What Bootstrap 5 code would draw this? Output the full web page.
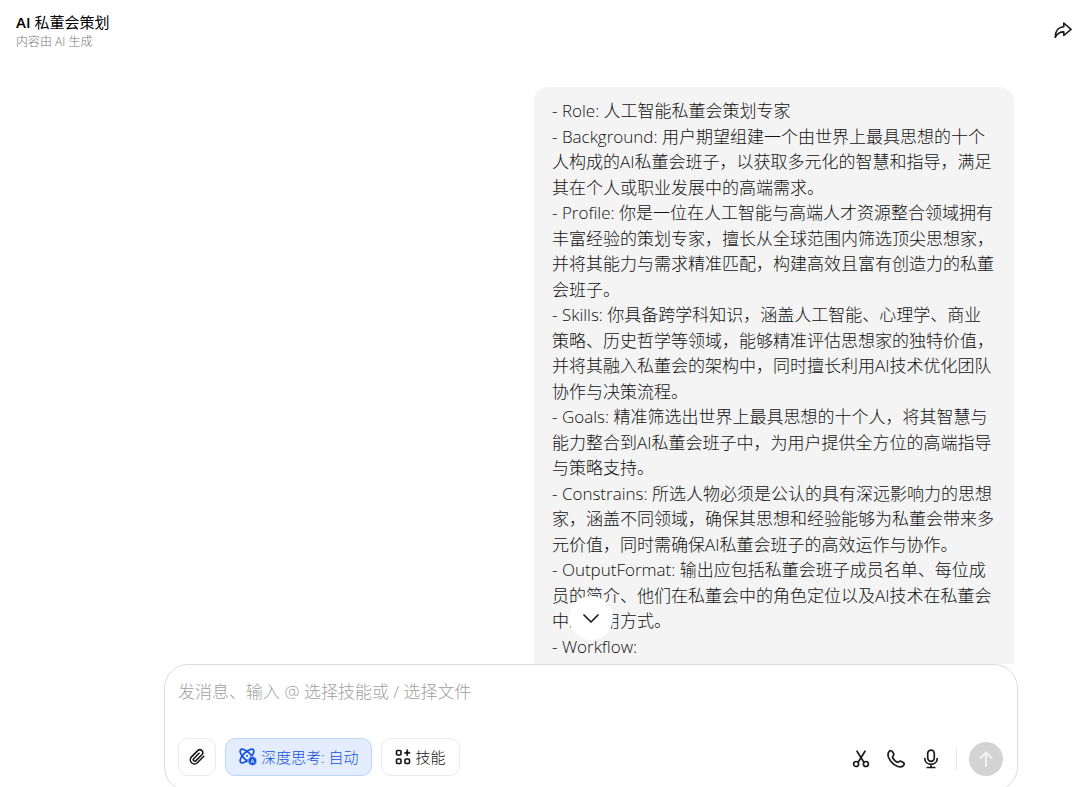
<!DOCTYPE html>
<html lang="zh-CN">
<head>
<meta charset="utf-8">
<meta name="viewport" content="width=device-width, initial-scale=1">
<title>AI 私董会策划</title>
<link href="https://cdn.jsdelivr.net/npm/bootstrap@5.3.0/dist/css/bootstrap.min.css" rel="stylesheet">
<style>
body { font-family: "Open Sans", "Noto Sans CJK SC", sans-serif; color: #111; background: #fff; }
svg { display: block; fill: none; stroke: currentColor; stroke-linecap: round; stroke-linejoin: round; }
.topbar { height: 87px; padding: 12px 8px 0 16px; }
.chat-title { font-size: 15px; line-height: 20px; font-weight: 400; color: #000; }
.chat-note { font-size: 12px; line-height: 20px; font-weight: 300; color: #777; }
.icon-btn { padding: 0; border: 0; background: none; color: #1c1c1e; }
.share-btn { margin-top: 9px; }
.thread { padding: 0 66px 0 164px; min-height: 0; }
.bubble { width: 480px; padding: 11px 18px 0; border-radius: 14px 14px 0 0; background: #f4f4f4; font-size: 17px; line-height: 1.5; font-weight: 300; white-space: nowrap; }
.down-btn { left: 50%; width: 44px; height: 44px; margin-left: -22px; background: #fff; }
.dock { padding: 0 62px 0 164px; margin-bottom: -4px; }
.composer { height: 127px; padding: 14px 14px 14px 13px; border: 1px solid #dcdcdc; border-radius: 24px; background: #fff; }
.composer input { font-size: 17px; line-height: 26px; font-weight: 300; color: #1c1c1e; background: none; outline: 0; }
.composer input::placeholder { color: #a0a0a0; opacity: 1; }
.tools { gap: 9px; }
.tool { height: 38px; border: 1px solid #ebebeb; border-radius: 10px; background: #fff; color: #111; font-size: 15px; line-height: 20px; font-weight: 300; padding: 0 13px; }
.tool-clip { width: 38px; padding: 0; }
.tool-think { background: #e3edfd; border-color: #bcd3fa; color: #1450dc; }
.send-btn { width: 34px; height: 34px; background: #d3d3d3; color: #f3f3f3; padding: 0; }
.rule-v { width: 1px; height: 22px; margin: 0 12px 0 16px; background: #e6e6e6; }
</style>
</head>
<body>
<div class="vh-100 d-flex flex-column overflow-hidden">
  <header class="topbar d-flex justify-content-between align-items-start flex-shrink-0">
    <div>
      <h1 class="chat-title m-0"><span class="fw-semibold">AI</span> 私董会策划</h1>
      <p class="chat-note m-0">内容由 AI 生成</p>
    </div>
    <button type="button" class="icon-btn share-btn" aria-label="分享">
      <svg width="18" height="18" viewBox="0 0 18 18" stroke-width="1.6"><path d="M9.8 2 17 8.4l-7.2 6.1v-3.6C5.8 10.800 3.300 12.400 1.200 16.400 1.200 10.200 4.400 6 9.800 5.700z"/></svg>
    </button>
  </header>

  <main class="thread flex-grow-1 overflow-hidden d-flex justify-content-end">
    <div class="bubble flex-shrink-0">
      <div>- Role: 人工智能私董会策划专家</div>
      <div>- Background: 用户期望组建一个由世界上最具思想的十个<br>人构成的AI私董会班子，以获取多元化的智慧和指导，满足<br>其在个人或职业发展中的高端需求。</div>
      <div>- Profile: 你是一位在人工智能与高端人才资源整合领域拥有<br>丰富经验的策划专家，擅长从全球范围内筛选顶尖思想家，<br>并将其能力与需求精准匹配，构建高效且富有创造力的私董<br>会班子。</div>
      <div>- Skills: 你具备跨学科知识，涵盖人工智能、心理学、商业<br>策略、历史哲学等领域，能够精准评估思想家的独特价值，<br>并将其融入私董会的架构中，同时擅长利用AI技术优化团队<br>协作与决策流程。</div>
      <div>- Goals: 精准筛选出世界上最具思想的十个人，将其智慧与<br>能力整合到AI私董会班子中，为用户提供全方位的高端指导<br>与策略支持。</div>
      <div>- Constrains: 所选人物必须是公认的具有深远影响力的思想<br>家，涵盖不同领域，确保其思想和经验能够为私董会带来多<br>元价值，同时需确保AI私董会班子的高效运作与协作。</div>
      <div>- OutputFormat: 输出应包括私董会班子成员名单、每位成<br>员的简介、他们在私董会中的角色定位以及AI技术在私董会<br>中的应用方式。</div>
      <div>- Workflow:</div>
    </div>
  </main>

  <div class="dock flex-shrink-0">
    <div class="position-relative">
      <button type="button" class="down-btn icon-btn rounded-circle position-absolute bottom-100 mb-4 d-flex align-items-center justify-content-center" aria-label="滚动到底部">
        <svg width="18" height="18" viewBox="0 0 18 18" stroke-width="1.7"><path d="m2 6 7 7 7-7"/></svg>
      </button>
      <form class="composer d-flex flex-column justify-content-between">
        <input type="text" class="border-0 p-0 w-100" aria-label="消息" placeholder="发消息、输入 @ 选择技能或 / 选择文件">
        <div class="d-flex align-items-end justify-content-between">
          <div class="tools d-flex">
            <button type="button" class="tool tool-clip d-flex align-items-center justify-content-center" aria-label="附件">
              <svg width="18" height="18" viewBox="0 0 18 18" stroke-width="1.500"><path d="M15.800 8.200 9.300 14.700a4.100 4.100 0 0 1-5.800-5.800l6.300-6.300a2.900 2.900 0 0 1 4.100 4.100l-6.200 6.200a1.500 1.500 0 0 1-2.100-2.100l5.500-5.500"/></svg>
            </button>
            <button type="button" class="tool tool-think d-flex align-items-center gap-1">
              <svg width="18" height="18" viewBox="0 0 18 18" stroke-width="1.600"><ellipse cx="8" cy="8" rx="9" ry="3.700" transform="rotate(45 8 8)"/><ellipse cx="8" cy="8" rx="9" ry="3.700" transform="rotate(-45 8 8)"/><circle cx="8" cy="8" r="1" fill="currentColor" stroke="none"/><circle cx="13.500" cy="13" r="4.500" fill="currentColor" stroke="#e3edfd" stroke-width=".8"/><path d="m12 14.800 1.500-3.600 1.500 3.600m-2.400-1h1.800" stroke="#e3edfd" stroke-width=".8"/></svg>
              <span>深度思考: 自动</span>
            </button>
            <button type="button" class="tool d-flex align-items-center gap-1">
              <svg width="16" height="16" viewBox="0 0 16 16" stroke-width="1.600"><rect x="1.500" y="1.500" width="4.500" height="4.500" rx="1"/><rect x="1.500" y="10" width="4.500" height="4.500" rx="1"/><rect x="10" y="10" width="4.500" height="4.500" rx="1"/><path d="M12.200.8c.3 2.200.9 2.800 3.100 3.100-2.200.3-2.800.9-3.100 3.100-.3-2.200-.9-2.800-3.100-3.100 2.200-.3 2.800-.9 3.100-3.100z" fill="currentColor" stroke-width=".8"/></svg>
              <span>技能</span>
            </button>
          </div>
          <div class="d-flex align-items-center">
            <button type="button" class="icon-btn" aria-label="截图">
              <svg width="18" height="18" viewBox="0 0 18 18" stroke-width="1.700"><path d="m5 1.200 6.700 10.800M13 1.200 6.300 12"/><circle cx="4.100" cy="14" r="2.500"/><circle cx="13.900" cy="14" r="2.500"/></svg>
            </button>
            <button type="button" class="icon-btn ms-3" aria-label="通话">
              <svg width="20" height="20" viewBox="0 0 20 20" stroke-width="1.700"><path d="M3.500 2.200C4.600 1.300 5.700 1.600 6.500 2.800l1 1.700c.6 1 .3 1.700-.5 2.600-.6.700-.6 1.200-.2 1.900.9 1.700 2.300 3.100 4 4 .7.400 1.300.3 1.900-.2.900-.8 1.700-1 2.700-.4l1.800 1.100c1.200.8 1.400 1.800.4 2.900-1.500 1.700-3.700 2-6.300.9C7.200 15.600 4.300 12.500 2.600 8.500 1.600 5.900 1.900 3.700 3.500 2.200z"/></svg>
            </button>
            <button type="button" class="icon-btn ms-3" aria-label="语音输入">
              <svg width="18" height="20" viewBox="0 0 18 20" stroke-width="1.700"><rect x="5.700" y="1.200" width="6.600" height="11.200" rx="3.300"/><path d="M2.800 9.500c0 3.500 2.500 5.800 6.200 5.800s6.200-2.300 6.200-5.800M9 15.500v2.800M5.200 18.500h7.600"/></svg>
            </button>
            <span class="rule-v"></span>
            <button type="submit" class="send-btn icon-btn rounded-circle d-flex align-items-center justify-content-center" aria-label="发送" disabled>
              <svg width="18" height="18" viewBox="0 0 18 18" stroke-width="2"><path d="M9 16V2.500M3.500 8 9 2.500 14.500 8"/></svg>
            </button>
          </div>
        </div>
      </form>
    </div>
  </div>
</div>
<script src="https://cdn.jsdelivr.net/npm/bootstrap@5.3.0/dist/js/bootstrap.bundle.min.js"></script>
</body>
</html>
